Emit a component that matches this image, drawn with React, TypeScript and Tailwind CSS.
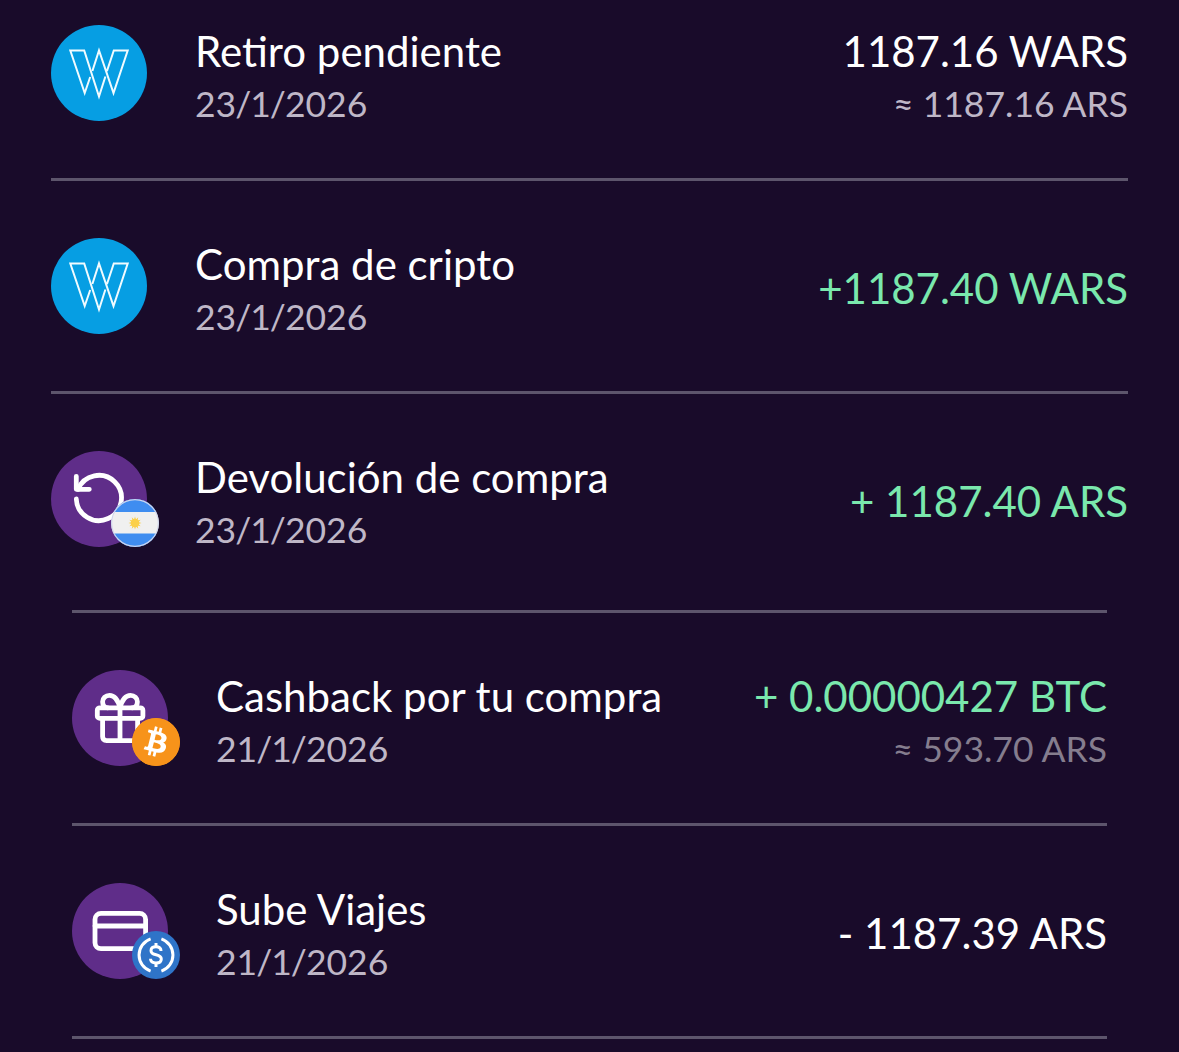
import type { ReactNode } from "react";
import { SiBitcoin } from "react-icons/si";

type Transaction = {
  title: string;
  date: string;
  amount: string;
  amountClass: string;
  approx?: string;
  approxClass?: string;
  icon: ReactNode;
  rowClass: string;
  dividerClass: string;
};

function WarsIcon() {
  return (
    <div className="size-24 shrink-0 rounded-full bg-[#069ee3]">
      <svg viewBox="0 0 96 96" className="size-24" fill="none" stroke="#f0fbff" strokeWidth="2">
        <path d="M41.4 46 L48 25.5 L62.5 68 L76.7 25.5 H62.8 L56 46" />
        <path d="M39.2 52 L33.7 68 L19.3 25.5 H33.2 L48 71.5 L54.4 51.5" />
      </svg>
    </div>
  );
}

function IconCircle({ children, badge }: { children: ReactNode; badge: ReactNode }) {
  return (
    <div className="relative size-24 shrink-0 rounded-full bg-[#5f2d89]">
      <svg
        viewBox="0 0 96 96"
        className="size-24"
        fill="none"
        stroke="white"
        strokeWidth="4.8"
        strokeLinecap="round"
        strokeLinejoin="round"
      >
        {children}
      </svg>
      <div className="absolute top-12 left-[60px] size-12 overflow-hidden rounded-full">{badge}</div>
    </div>
  );
}

function ArgentinaBadge() {
  return (
    <svg viewBox="0 0 48 48" className="size-12">
      <rect width="48" height="48" fill="#f0f0f0" />
      <rect width="48" height="13" fill="#3f8df0" />
      <rect y="34.5" width="48" height="13.5" fill="#3f8df0" />
      <g fill="#fbd04a">
        <path d="M24 17.5 L26 24 L24 30.5 L22 24 Z M17.5 24 L24 22 L30.5 24 L24 26 Z" />
        <path
          d="M24 17.5 L26 24 L24 30.5 L22 24 Z M17.5 24 L24 22 L30.5 24 L24 26 Z"
          transform="rotate(30 24 24)"
        />
        <path
          d="M24 17.5 L26 24 L24 30.5 L22 24 Z M17.5 24 L24 22 L30.5 24 L24 26 Z"
          transform="rotate(60 24 24)"
        />
        <circle cx="24" cy="24" r="4.2" />
      </g>
      <circle cx="24" cy="24" r="23.4" fill="none" stroke="#cfd6ee" strokeWidth="1.2" />
    </svg>
  );
}

function BitcoinBadge() {
  return (
    <div className="flex size-12 items-center justify-center bg-[#f7931a]">
      <div className="flex size-10 items-center justify-center rounded-full bg-white">
        <SiBitcoin className="size-12 shrink-0 text-[#f7931a]" />
      </div>
    </div>
  );
}

function UsdcBadge() {
  return (
    <svg viewBox="0 0 48 48" className="size-12" fill="none" stroke="white" strokeWidth="3">
      <rect width="48" height="48" fill="#2f74c8" stroke="none" />
      <path d="M18.6 7.9 A17 17 0 0 0 18.6 40.1" />
      <path d="M29.4 7.9 A17 17 0 0 1 29.4 40.1" />
      <path d="M29 20 C29 17 27 15.8 24 15.8 C21 15.8 19 17.3 19 19.7 C19 25.5 29.3 22 29.3 28 C29.3 30.6 27.2 32 24 32 C20.7 32 18.6 30.5 18.5 27.8" />
      <path d="M24 12 V16 M24 32 V36" />
    </svg>
  );
}

const transactions: Transaction[] = [
  {
    title: "Retiro pendiente",
    date: "23/1/2026",
    amount: "1187.16 WARS",
    amountClass: "text-white",
    approx: "≈ 1187.16 ARS",
    approxClass: "text-[#bfb7c7]",
    icon: <WarsIcon />,
    rowClass: "mx-[51px]",
    dividerClass: "mx-[51px] mt-[57px]",
  },
  {
    title: "Compra de cripto",
    date: "23/1/2026",
    amount: "+1187.40 WARS",
    amountClass: "text-[#7ae8ad]",
    icon: <WarsIcon />,
    rowClass: "mx-[51px]",
    dividerClass: "mx-[51px] mt-[57px]",
  },
  {
    title: "Devolución de compra",
    date: "23/1/2026",
    amount: "+ 1187.40 ARS",
    amountClass: "text-[#7ae8ad]",
    icon: (
      <IconCircle badge={<ArgentinaBadge />}>
        <path d="M25.3 25.3 V38.3 H38.3" />
        <path d="M25.3 48 A22.6 22.6 0 1 0 27 38.3" />
      </IconCircle>
    ),
    rowClass: "mx-[51px]",
    dividerClass: "mx-[72px] mt-[63px]",
  },
  {
    title: "Cashback por tu compra",
    date: "21/1/2026",
    amount: "+ 0.00000427 BTC",
    amountClass: "text-[#7ae8ad]",
    approx: "≈ 593.70 ARS",
    approxClass: "text-[#857d8e]",
    icon: (
      <IconCircle badge={<BitcoinBadge />}>
        <rect x="25.3" y="37.8" width="45.6" height="10.6" rx="2.5" />
        <path d="M30.6 48.4 V66.5 Q30.6 70.6 34.7 70.6 H61.5 Q65.6 70.6 65.6 66.5 V48.4 M48 37.8 V70.6" />
        <path d="M48 37.8 C46 30 42 25.3 37.5 25.3 C33.5 25.3 30.6 28.3 30.6 31.7 C30.6 35 32 37.8 36 37.8" />
        <path d="M48 37.8 C50 30 54 25.3 58.5 25.3 C62.5 25.3 65.4 28.3 65.4 31.7 C65.4 35 64 37.8 60 37.8" />
      </IconCircle>
    ),
    rowClass: "mx-[72px]",
    dividerClass: "mx-[72px] mt-[57px]",
  },
  {
    title: "Sube Viajes",
    date: "21/1/2026",
    amount: "- 1187.39 ARS",
    amountClass: "text-white",
    icon: (
      <IconCircle badge={<UsdcBadge />}>
        <rect x="23" y="30.4" width="50.6" height="35.3" rx="6" />
        <path d="M23 43 H73.6" />
      </IconCircle>
    ),
    rowClass: "mx-[72px]",
    dividerClass: "mx-[72px] mt-[57px]",
  },
];

function DateLabel({ date }: { date: string }) {
  const [day, month, year] = date.split("/");
  const slash = <span className="-mx-px">/</span>;

  return (
    <span className="text-[35.5px] leading-[52px] text-[#bfb7c7]">
      {day}
      {slash}
      {month}
      {slash}
      {year}
    </span>
  );
}

function TransactionRow({ item }: { item: Transaction }) {
  return (
    <li>
      <div className={`flex h-24 ${item.rowClass}`}>
        {item.icon}
        <div className="ml-12 flex flex-1 flex-col">
          <span className="text-[42px] leading-[53px]">{item.title}</span>
          <DateLabel date={item.date} />
        </div>
        <div
          className={`flex flex-col items-end whitespace-nowrap ${item.approx ? "" : "pt-6"}`}
        >
          <span className={`text-[42px] leading-[53px] ${item.amountClass}`}>{item.amount}</span>
          {item.approx && (
            <span className={`text-[35.5px] leading-[52px] ${item.approxClass}`}>{item.approx}</span>
          )}
        </div>
      </div>
      <div className={`h-[3px] bg-[#5d556c] ${item.dividerClass}`} />
    </li>
  );
}

export default function App() {
  return (
    <main className="h-[1052px] w-[1179px] overflow-hidden bg-[#190b2a] pt-[25px] font-['Lato',sans-serif] text-white">
      <ul className="flex flex-col gap-[57px]">
        {transactions.map((item) => (
          <TransactionRow key={item.title} item={item} />
        ))}
      </ul>
    </main>
  );
}
